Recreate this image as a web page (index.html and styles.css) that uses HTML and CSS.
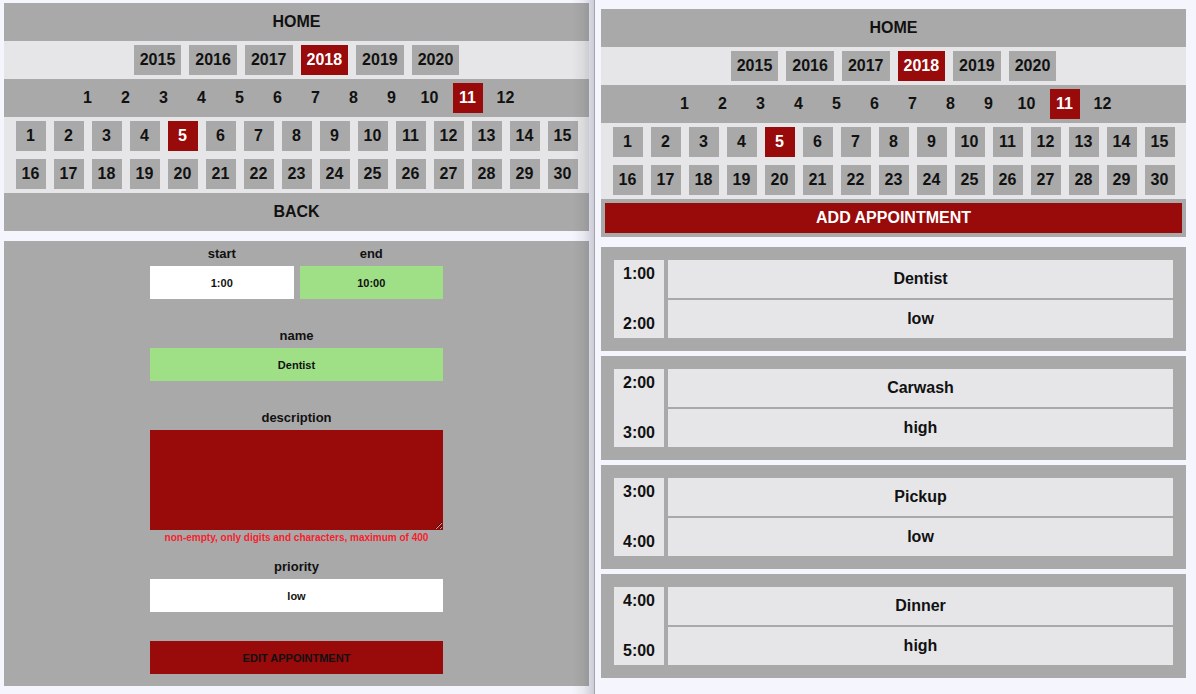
FILE: index.html
```html
<!DOCTYPE html>
<html>
<head>
<meta charset="utf-8">
<link rel="stylesheet" href="styles.css">
</head>
<body>
<div class="pane pane-left">
  <div class="bar">HOME</div>
  <div class="years">
    <span class="btn">2015</span><span class="btn">2016</span><span class="btn">2017</span><span class="btn sel">2018</span><span class="btn">2019</span><span class="btn">2020</span>
  </div>
  <div class="months">
    <span class="m">1</span><span class="m">2</span><span class="m">3</span><span class="m">4</span><span class="m">5</span><span class="m">6</span><span class="m">7</span><span class="m">8</span><span class="m">9</span><span class="m">10</span><span class="m sel">11</span><span class="m">12</span>
  </div>
  <div class="days">
    <span class="d">1</span><span class="d">2</span><span class="d">3</span><span class="d">4</span><span class="d sel">5</span><span class="d">6</span><span class="d">7</span><span class="d">8</span><span class="d">9</span><span class="d">10</span><span class="d">11</span><span class="d">12</span><span class="d">13</span><span class="d">14</span><span class="d">15</span>
    <span class="d">16</span><span class="d">17</span><span class="d">18</span><span class="d">19</span><span class="d">20</span><span class="d">21</span><span class="d">22</span><span class="d">23</span><span class="d">24</span><span class="d">25</span><span class="d">26</span><span class="d">27</span><span class="d">28</span><span class="d">29</span><span class="d">30</span>
  </div>
  <div class="bar">BACK</div>

  <form class="form">
    <div class="pair">
      <div class="field">
        <label class="lbl">start</label>
        <input class="inp" type="text" value="1:00">
      </div>
      <div class="field">
        <label class="lbl">end</label>
        <input class="inp ok" type="text" value="10:00">
      </div>
    </div>
    <div class="field wide gap-name">
      <label class="lbl">name</label>
      <input class="inp ok" type="text" value="Dentist">
    </div>
    <div class="field wide gap-desc">
      <label class="lbl">description</label>
      <textarea class="area"></textarea>
      <div class="err">non-empty, only digits and characters, maximum of 400</div>
    </div>
    <div class="field wide gap-prio">
      <label class="lbl">priority</label>
      <input class="inp" type="text" value="low">
    </div>
    <button class="submit" type="button">EDIT APPOINTMENT</button>
  </form>
</div>

<div class="pane pane-right">
  <div class="bar">HOME</div>
  <div class="years">
    <span class="btn">2015</span><span class="btn">2016</span><span class="btn">2017</span><span class="btn sel">2018</span><span class="btn">2019</span><span class="btn">2020</span>
  </div>
  <div class="months">
    <span class="m">1</span><span class="m">2</span><span class="m">3</span><span class="m">4</span><span class="m">5</span><span class="m">6</span><span class="m">7</span><span class="m">8</span><span class="m">9</span><span class="m">10</span><span class="m sel">11</span><span class="m">12</span>
  </div>
  <div class="days">
    <span class="d">1</span><span class="d">2</span><span class="d">3</span><span class="d">4</span><span class="d sel">5</span><span class="d">6</span><span class="d">7</span><span class="d">8</span><span class="d">9</span><span class="d">10</span><span class="d">11</span><span class="d">12</span><span class="d">13</span><span class="d">14</span><span class="d">15</span>
    <span class="d">16</span><span class="d">17</span><span class="d">18</span><span class="d">19</span><span class="d">20</span><span class="d">21</span><span class="d">22</span><span class="d">23</span><span class="d">24</span><span class="d">25</span><span class="d">26</span><span class="d">27</span><span class="d">28</span><span class="d">29</span><span class="d">30</span>
  </div>
  <div class="add-wrap"><div class="add">ADD APPOINTMENT</div></div>

  <div class="cards">
    <div class="card">
      <div class="times"><span>1:00</span><span>2:00</span></div>
      <div class="info"><div class="cell">Dentist</div><div class="cell">low</div></div>
    </div>
    <div class="card">
      <div class="times"><span>2:00</span><span>3:00</span></div>
      <div class="info"><div class="cell">Carwash</div><div class="cell">high</div></div>
    </div>
    <div class="card">
      <div class="times"><span>3:00</span><span>4:00</span></div>
      <div class="info"><div class="cell">Pickup</div><div class="cell">low</div></div>
    </div>
    <div class="card">
      <div class="times"><span>4:00</span><span>5:00</span></div>
      <div class="info"><div class="cell">Dinner</div><div class="cell">high</div></div>
    </div>
  </div>
</div>
</body>
</html>
```
FILE: styles.css
```css
* { box-sizing: border-box; }

html, body {
  margin: 0;
  height: 694px;
  overflow: hidden;
  background: #f5f5fd;
  font-family: "Liberation Sans", Arial, sans-serif;
  color: #111;
}

body {
  display: flex;
  align-items: flex-start;
}

.pane {
  display: flex;
  flex-direction: column;
  flex: none;
}

.pane-left {
  position: relative;
  width: 595px;
  height: 694px;
  padding: 3px 5px 0 4px;
  border-right: 1px solid #a4a4ac;
}

.pane-left::after {
  content: "";
  position: absolute;
  top: 0;
  bottom: 0;
  right: 0;
  width: 22px;
  background: linear-gradient(to right, rgba(40, 40, 60, 0) 0%, rgba(40, 40, 60, 0.06) 50%, rgba(40, 40, 60, 0.2) 100%);
  pointer-events: none;
}

.pane-right {
  width: 601px;
  padding: 9px 10px 0 6px;
}

.bar {
  height: 38px;
  background: #a9a9a9;
  display: flex;
  align-items: center;
  justify-content: center;
  font-size: 16px;
  font-weight: bold;
}

.years,
.months,
.days {
  display: flex;
  justify-content: center;
  gap: 8px;
  padding: 4px;
  font-size: 16px;
  font-weight: bold;
}

.years { background: #e6e6e8; }
.months { background: #a9a9a9; }
.days { background: #e6e6e8; flex-wrap: wrap; }

.btn {
  height: 30px;
  line-height: 30px;
  padding: 0 6px;
  background: #a9a9a9;
}

.m {
  width: 30px;
  height: 30px;
  line-height: 30px;
  text-align: center;
}

.d {
  width: 30px;
  height: 30px;
  line-height: 30px;
  text-align: center;
  background: #a9a9a9;
}

.sel {
  background: #990a0a;
  color: #fff;
}

/* form */
.form {
  margin: 10px 0 0;
  background: #a9a9a9;
  padding: 4px 0 12px;
  display: flex;
  flex-direction: column;
  align-items: center;
}

.pair {
  width: 293px;
  display: grid;
  grid-template-columns: 1fr 1fr;
  gap: 6px;
}

.field {
  display: flex;
  flex-direction: column;
  align-items: center;
}

.wide { width: 293px; }
.gap-name { margin-top: 28px; }
.gap-desc { margin-top: 28px; }
.gap-prio { margin-top: 14px; }

.lbl {
  font-size: 13px;
  font-weight: bold;
  line-height: 17px;
  margin-bottom: 4px;
  color: #111;
}

.inp {
  width: 100%;
  height: 33px;
  border: none;
  outline: none;
  margin: 0;
  padding: 0;
  background: #fff;
  text-align: center;
  font-family: "Liberation Sans", Arial, sans-serif;
  font-size: 11px;
  font-weight: bold;
  color: #111;
}

.inp.ok { background: #9fe086; }

.area {
  display: block;
  width: 100%;
  height: 100px;
  border: none;
  outline: none;
  margin: 0;
  padding: 0;
  background: #990a0a;
  font-family: "Liberation Sans", Arial, sans-serif;
}

.err {
  margin-top: 2px;
  font-size: 10px;
  font-weight: bold;
  line-height: 12px;
  color: #f71d2d;
  white-space: nowrap;
}

.submit {
  margin-top: 29px;
  width: 293px;
  height: 33px;
  border: none;
  padding: 0;
  background: #990a0a;
  color: #111;
  font-family: "Liberation Sans", Arial, sans-serif;
  font-size: 11px;
  font-weight: bold;
}

/* right */
.add-wrap {
  background: #a9a9a9;
  padding: 4px;
}

.add {
  height: 30px;
  background: #990a0a;
  color: #fff;
  display: flex;
  align-items: center;
  justify-content: center;
  font-size: 16px;
  font-weight: bold;
}

.cards {
  margin-top: 10px;
  display: flex;
  flex-direction: column;
  gap: 5px;
}

.card {
  background: #a9a9a9;
  padding: 13px;
  display: flex;
  gap: 4px;
}

.times {
  width: 50px;
  height: 78px;
  background: #e6e6e8;
  display: flex;
  flex-direction: column;
  justify-content: space-between;
  align-items: center;
  padding: 5px 0 5px;
  font-size: 16px;
  font-weight: bold;
  line-height: 18px;
}

.info {
  flex: 1;
  display: flex;
  flex-direction: column;
  gap: 2px;
}

.cell {
  height: 38px;
  background: #e6e6e8;
  display: flex;
  align-items: center;
  justify-content: center;
  font-size: 16px;
  font-weight: bold;
}
```
